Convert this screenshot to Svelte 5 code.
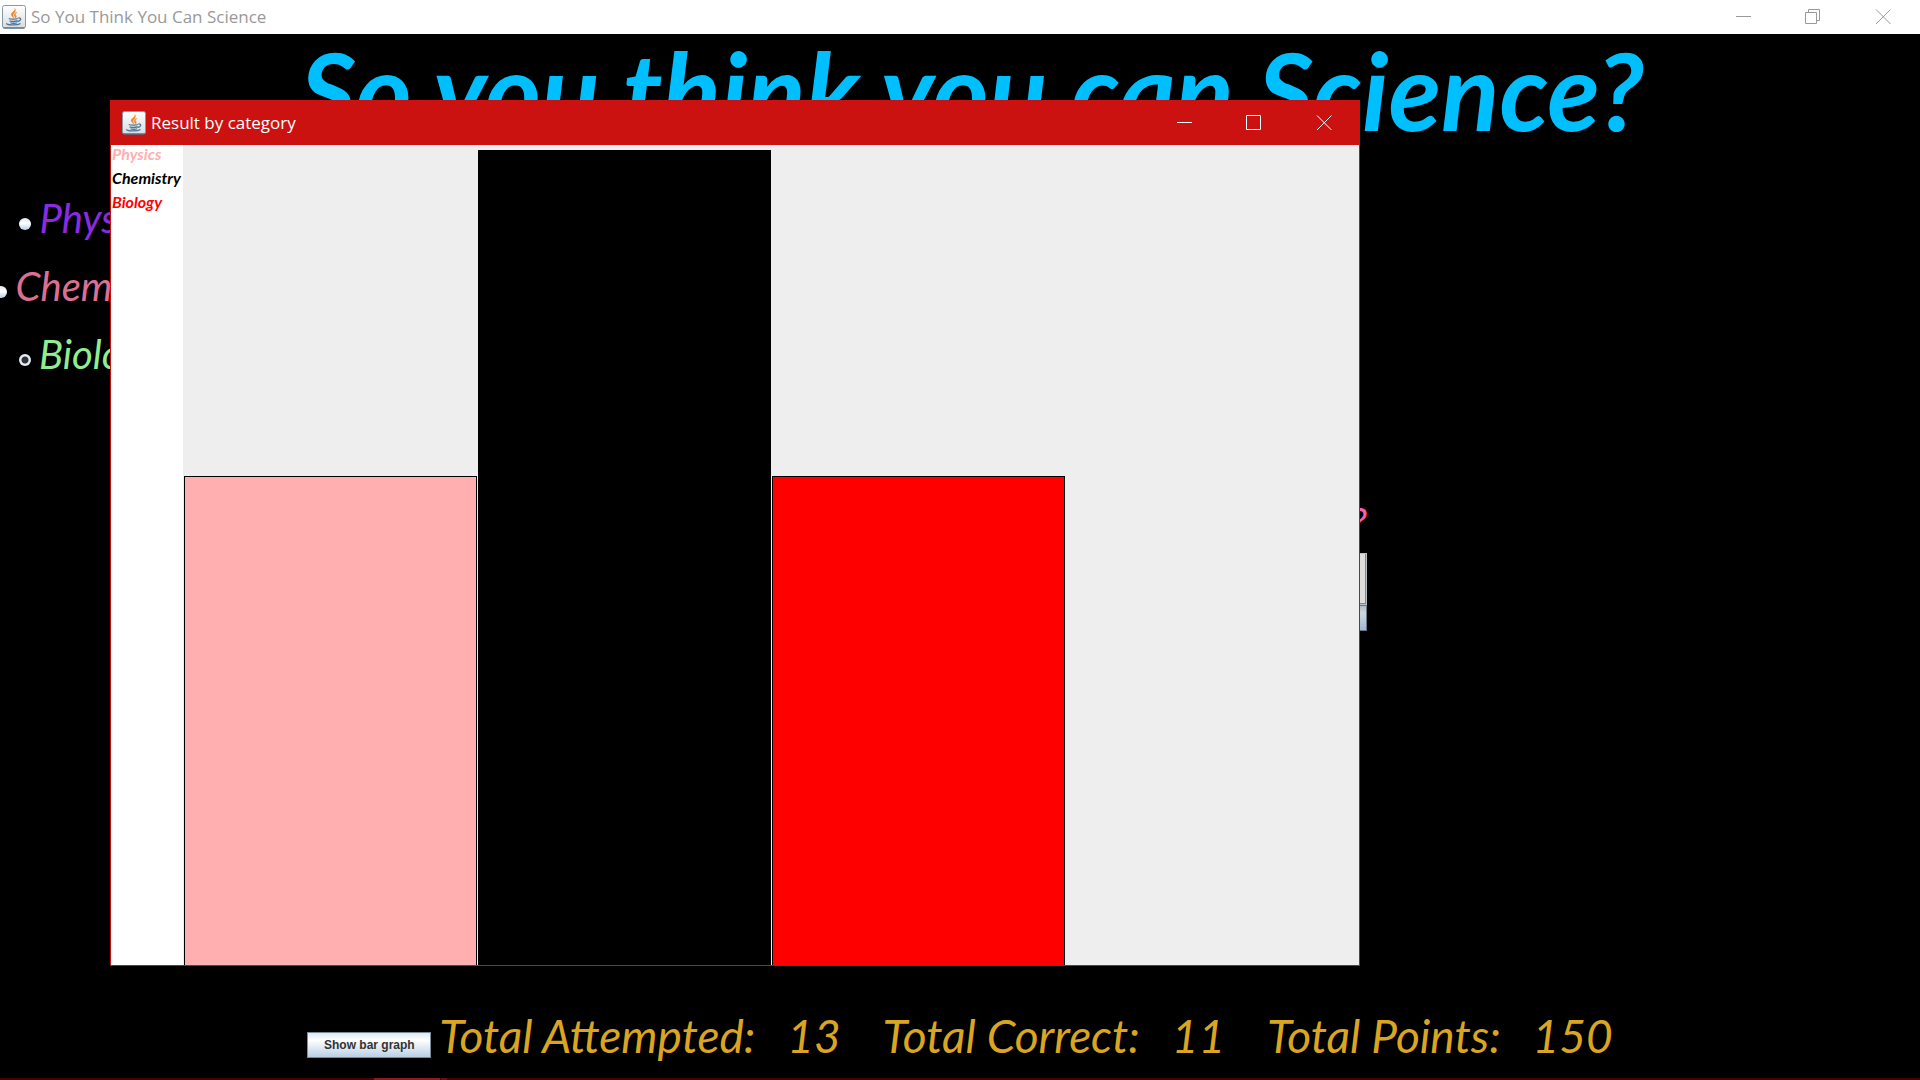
<script>
  const bars = [
    { name: 'Physics', color: '#ffafaf', value: 3 },
    { name: 'Chemistry', color: '#000000', value: 5 },
    { name: 'Biology', color: '#ff0000', value: 3 }
  ];
  const max = 5;
  const subjects = [
    { name: 'Physics', color: '#8a2be2' },
    { name: 'Chemistry', color: '#db7093' },
    { name: 'Biology', color: '#90ee90' }
  ];
  const totals = [
    { label: 'Total Attempted:', value: 13 },
    { label: 'Total Correct:', value: 11 },
    { label: 'Total Points:', value: 150 }
  ];
  let subject = $state('Biology');
</script>

{#snippet javaIcon()}
  <svg class="java" viewBox="0 0 24 24" aria-hidden="true">
    <defs>
      <linearGradient id="tile" x1="0" y1="0" x2="0" y2="1">
        <stop offset="0" stop-color="#ffffff" />
        <stop offset="1" stop-color="#d9dcdf" />
      </linearGradient>
    </defs>
    <rect x="0.5" y="0.5" width="23" height="22.5" rx="2" fill="url(#tile)" stroke="#8299aa" />
    <path d="M1.5 23h21" stroke="#3f5a6e" />
    <path d="M12.800 3.500c1.500 2.800-4.500 3.800-3.500 6.500.4 1.200 1.700 2 2.300 3.200.2-1.700-1-2.500-.4-3.700.8-1.600 3.400-3 1.600-6zM15 7.300c-2.200.8-4 2.700-1.800 4.700.3.500.1 1-.3 1.500 2.800-1.800.8-3 .5-4 0-.9.700-1.400 1.600-2.200z" fill="#ee842a" stroke="#ee842a" stroke-width="0.400" />
    <path d="M6.800 13.500c1.500 1 7.500.9 9 0M7.500 15.700c2 1.100 6 1 8 0M8.500 17.700c1.500.8 5 .8 6.500 0M16.300 13c3.600-.5 3 2.800-.8 3.500M5 18.300c-2 1.700 10 2.600 13.500.2" fill="none" stroke="#4a7699" stroke-width="1.300" />
  </svg>
{/snippet}

{#snippet controls(restored)}
  <div class="controls">
    <button aria-label="Minimize"><svg viewBox="0 0 16 16"><path d="M1 7.500h15" /></svg></button>
    <button aria-label="Maximize">
      <svg viewBox="0 0 16 16">
        {#if restored}
          <path d="M0.500 3.500h11v11h-11zM3.500 3.500v-3h11v11h-3" />
        {:else}
          <path d="M0.500 0.500h14v14h-14z" />
        {/if}
      </svg>
    </button>
    <button aria-label="Close"><svg viewBox="0 0 16 16"><path d="M1 0.500l14.500 14.500M15.500 0.500L1 15" /></svg></button>
  </div>
{/snippet}

<div class="app">
  <header class="titlebar">
    {@render javaIcon()}
    <span>So You Think You Can Science</span>
    {@render controls(true)}
  </header>

  <main>
    <h1>So you think you can Science?</h1>
    <div class="body">
      <form class="subjects">
        {#each subjects as s}
          <label style:color={s.color}>
            <input type="radio" name="subject" value={s.name} bind:group={subject} />
            {s.name}
          </label>
        {/each}
      </form>
      <section class="quiz">
        <span class="question">?</span>
        <div class="answers"></div>
        <div class="submit"></div>
      </section>
    </div>
    <footer>
      <button class="graph">Show bar graph</button>
      {#each totals as t}
        <span class="total"><span>{t.label}</span><span>{t.value}</span></span>
      {/each}
    </footer>
  </main>
  <div class="taskbar"><i></i><b></b></div>

  <div class="dialog" role="dialog" aria-label="Result by category">
    <header class="titlebar">
      {@render javaIcon()}
      <span>Result by category</span>
      {@render controls(false)}
    </header>
    <div class="result">
      <ul>
        {#each bars as b}
          <li style:color={b.color}>{b.name}</li>
        {/each}
      </ul>
      <div class="chart">
        {#each bars as b}
          <div class="bar" style:background={b.color} style:height="{(b.value / max) * 100}%"></div>
        {/each}
      </div>
    </div>
  </div>
</div>

<style>
  :global(body) {
    margin: 0;
    background: #000;
  }
  .app {
    position: relative;
    display: flex;
    flex-direction: column;
    height: 100vh;
    overflow: hidden;
    background: #000;
    font-family: 'Open Sans', 'Noto Sans', sans-serif;
  }
  button {
    padding: 0;
    border: 0;
    background: none;
    color: inherit;
  }
  .titlebar {
    display: flex;
    flex: none;
    align-items: center;
    gap: 5px;
    height: 34px;
    padding: 0 2px;
    background: #fff;
    color: #999;
    font-size: 17px;
    line-height: 24px;
  }
  .java {
    flex: none;
    width: 24px;
    height: 24px;
  }
  .controls {
    display: flex;
    margin-left: auto;
  }
  .controls button {
    display: flex;
    align-items: center;
    justify-content: center;
    width: 70px;
    height: 32px;
  }
  .controls svg {
    width: 16px;
    height: 16px;
    fill: none;
    stroke: currentColor;
  }
  main {
    display: flex;
    flex: 1;
    flex-direction: column;
    min-height: 0;
    font-family: Lato, 'Open Sans', sans-serif;
    font-style: italic;
  }
  h1 {
    height: 124px;
    margin: 0;
    padding-left: 24px;
    color: #00bfff;
    font-size: 108px;
    font-weight: 700;
    line-height: 110px;
    text-align: center;
    white-space: nowrap;
  }
  .body {
    display: flex;
    flex: 1;
    min-height: 0;
  }
  .subjects {
    display: flex;
    flex-direction: column;
    align-items: center;
    width: 180px;
    padding-top: 26px;
  }
  .subjects label {
    display: flex;
    align-items: center;
    gap: 8px;
    font-size: 40px;
    line-height: 68px;
  }
  .subjects input {
    appearance: none;
    flex: none;
    width: 12px;
    height: 12px;
    margin: 12px 0 0;
    border-radius: 50%;
    background: linear-gradient(#dde8f3, #fff 45%, #b8cfe5);
  }
  .subjects input:checked {
    background: radial-gradient(#333 0 3px, #e4edf6 4px);
  }
  .quiz {
    display: flex;
    flex-direction: column;
    width: 1187px;
    padding-top: 340px;
  }
  .question {
    color: #ff5fa8;
    font-size: 40px;
    line-height: 48px;
    text-align: right;
  }
  .answers {
    box-sizing: border-box;
    height: 52px;
    margin-top: 7px;
    border: 1px solid #b8c0c8;
    background: #ddd;
    box-shadow: inset -1px -1px #7a8a99;
  }
  .submit {
    box-sizing: border-box;
    height: 26px;
    border: 1px solid #66788a;
    background: linear-gradient(#b0bcc8, #ccd6e0 30%, #a3b8cc);
  }
  footer {
    display: flex;
    align-items: center;
    justify-content: center;
    height: 68px;
    padding-bottom: 8px;
    color: #daa520;
    font-size: 46px;
    line-height: 56px;
    white-space: nowrap;
  }
  .graph {
    width: 124px;
    height: 26px;
    margin: 18px 8px 0 0;
    border: 1px solid #7a8a99;
    background: linear-gradient(#dde8f3, #fff 30%, #b8cfe5);
    color: #333;
    font: bold 12px/24px 'Liberation Sans', sans-serif;
  }
  .total {
    display: flex;
    gap: 32px;
  }
  .total + .total {
    margin-left: 42px;
  }
  .taskbar {
    display: flex;
    flex: none;
    height: 2px;
    padding-left: 374px;
    background: #4b0000;
  }
  .taskbar i {
    width: 66px;
    background: #8b1a1a;
  }
  .taskbar b {
    width: 6px;
    margin-left: 1px;
    background: #6b1010;
  }
  .dialog {
    position: absolute;
    top: 100px;
    left: 110px;
    display: flex;
    flex-direction: column;
    box-sizing: border-box;
    width: 1250px;
    height: 866px;
    border: 1px solid #cc1111;
    background: #eee;
  }
  .dialog .titlebar {
    height: 44px;
    padding: 0 0 0 11px;
    background: #cc1111;
    color: #fff;
  }
  .result {
    display: flex;
    flex: 1;
    min-height: 0;
  }
  ul {
    width: 72px;
    margin: 0;
    padding: 0;
    background: #fff;
    list-style: none;
    font: italic bold 16px/18px Lato, sans-serif;
  }
  li {
    padding: 0 0 6px 1px;
  }
  .chart {
    display: flex;
    flex: 1;
    align-items: flex-end;
    gap: 1px;
    padding: 5px 0 0 1px;
  }
  .bar {
    box-sizing: border-box;
    width: 293px;
    border: 1px solid #000;
    border-bottom: 0;
  }
</style>
